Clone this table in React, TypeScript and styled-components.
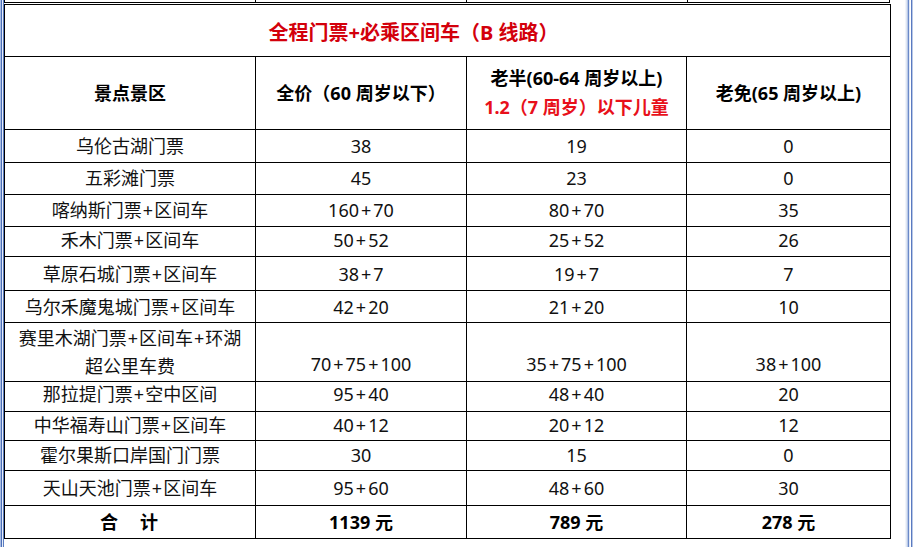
import React from "react";
import styled, { createGlobalStyle } from "styled-components";

const Global = createGlobalStyle`
  html, body { margin: 0; padding: 0; background: #ffffff; }
  body { font-family: "Noto Sans", "Noto Sans CJK SC", sans-serif; }
`;

const Page = styled.div`
  display: flex;
  width: 913px;
  height: 547px;
  overflow: hidden;
  background: #ffffff;
`;

const LeftRail = styled.div`
  flex: none;
  width: 4px;
  background: linear-gradient(
    to right,
    #a9bde3 0 1px,
    #4d6fb8 1px 2px,
    #e6edf8 2px 3px,
    #5a7cc0 3px 4px
  );
`;

const RightGap = styled.div`
  flex: none;
  width: 14px;
`;

const RightRail = styled.div`
  flex: none;
  width: 8px;
  background: linear-gradient(
    to right,
    #f1f4fa 0 1px,
    #dde5f3 1px 2px,
    #b8c8e7 2px 3px,
    #6a89c8 3px 4px,
    #e4eaf6 4px 5px,
    #ffffff 5px 6px,
    #5a7ac0 6px 7px,
    #b9c8e6 7px 8px
  );
`;

const Sheet = styled.div`
  flex: none;
  width: 887px;
  display: flex;
  flex-direction: column;
  gap: 1px;
`;

const PrevStrip = styled.div`
  display: grid;
  grid-template-columns: 250px 210px 220px 201px;
  gap: 1px;
  padding: 0 1px 1px 1px;
  width: 886px;
  box-sizing: border-box;
  background: #000;
`;

const PrevCell = styled.div`
  height: 2px;
  background: #fff;
`;

const Grid = styled.div`
  display: grid;
  grid-template-columns: 250px 210px 219px 203px;
  gap: 1px;
  padding: 1px;
  background: #000;
`;

const Cell = styled.div<{
  $h: number;
  $bold?: boolean;
  $valign?: "center" | "end";
  $lift?: number;
}>`
  height: ${(p) => p.$h}px;
  box-sizing: border-box;
  background: #fff;
  display: flex;
  flex-direction: column;
  align-items: center;
  justify-content: ${(p) => (p.$valign === "end" ? "flex-end" : "center")};
  padding-bottom: ${(p) =>
    p.$valign === "end" ? 3 : Math.max(0, (p.$lift ?? 0) * 2)}px;
  padding-top: ${(p) => Math.max(0, -(p.$lift ?? 0) * 2)}px;
  text-align: center;
  font-size: 18px;
  line-height: 28px;
  font-weight: ${(p) => (p.$bold ? 700 : 400)};
  color: ${(p) => (p.$bold ? "#000" : "#111")};
  white-space: nowrap;
`;

const TitleCell = styled.div`
  grid-column: span 4;
  height: 51px;
  background: #fff;
  display: flex;
  align-items: center;
  justify-content: center;
  padding: 5px 68px 0 0;
  box-sizing: border-box;
  font-size: 20px;
  line-height: 28px;
  font-weight: 700;
  color: #d3000b;
`;

const HeadLine = styled.span<{ $red?: boolean }>`
  display: block;
  line-height: 29px;
  color: ${(p) => (p.$red ? "#e8101a" : "#000")};
`;

const Plus = styled.span<{ $wide?: boolean }>`
  margin: 0 ${(p) => (p.$wide ? 2 : 1)}px;
`;

function withPlus(text: string, wide?: boolean) {
  const parts = text.split("+");
  return parts.map((part, i) => (
    <React.Fragment key={i}>
      {i > 0 && <Plus $wide={wide}>+</Plus>}
      {part}
    </React.Fragment>
  ));
}

const SumLabel = styled.span`
  letter-spacing: 2px;
`;

type Row = {
  name: string[];
  a: string;
  b: string;
  c: string;
  h: number;
  lift?: number;
  wrap?: boolean;
};

const rows: Row[] = [
  { name: ["乌伦古湖门票"], a: "38", b: "19", c: "0", h: 32 },
  { name: ["五彩滩门票"], a: "45", b: "23", c: "0", h: 31, lift: 1 },
  { name: ["喀纳斯门票+区间车"], a: "160+70", b: "80+70", c: "35", h: 31, lift: 1 },
  { name: ["禾木门票+区间车"], a: "50+52", b: "25+52", c: "26", h: 29, lift: 2 },
  { name: ["草原石城门票+区间车"], a: "38+7", b: "19+7", c: "7", h: 33 },
  { name: ["乌尔禾魔鬼城门票+区间车"], a: "42+20", b: "21+20", c: "10", h: 31 },
  {
    name: ["赛里木湖门票+区间车+环湖", "超公里车费"],
    a: "70+75+100",
    b: "35+75+100",
    c: "38+100",
    h: 58,
    wrap: true,
  },
  { name: ["那拉提门票+空中区间"], a: "95+40", b: "48+40", c: "20", h: 29, lift: 3 },
  { name: ["中华福寿山门票+区间车"], a: "40+12", b: "20+12", c: "12", h: 28, lift: 1 },
  { name: ["霍尔果斯口岸国门门票"], a: "30", b: "15", c: "0", h: 29, lift: 1 },
  { name: ["天山天池门票+区间车"], a: "95+60", b: "48+60", c: "30", h: 34 },
];

export default function App() {
  return (
    <>
      <Global />
      <Page>
        <LeftRail />
        <Sheet>
          <PrevStrip>
            <PrevCell />
            <PrevCell />
            <PrevCell />
            <PrevCell />
          </PrevStrip>
          <Grid>
            <TitleCell>全程门票+必乘区间车（B 线路）</TitleCell>

            <Cell $h={72} $bold>景点景区</Cell>
            <Cell $h={72} $bold>全价（60 周岁以下）</Cell>
            <Cell $h={72} $bold>
              <HeadLine>老半(60-64 周岁以上)</HeadLine>
              <HeadLine $red>1.2（7 周岁）以下儿童</HeadLine>
            </Cell>
            <Cell $h={72} $bold>老免(65 周岁以上)</Cell>

            {rows.map((r, i) => (
              <React.Fragment key={i}>
                <Cell $h={r.h} $lift={r.lift}>
                  {r.name.map((line, j) => (
                    <span key={j}>{withPlus(line)}</span>
                  ))}
                </Cell>
                <Cell $h={r.h} $lift={r.lift} $valign={r.wrap ? "end" : "center"}>
                  <span>{withPlus(r.a, true)}</span>
                </Cell>
                <Cell $h={r.h} $lift={r.lift} $valign={r.wrap ? "end" : "center"}>
                  <span>{withPlus(r.b, true)}</span>
                </Cell>
                <Cell $h={r.h} $lift={r.lift} $valign={r.wrap ? "end" : "center"}>
                  <span>{withPlus(r.c, true)}</span>
                </Cell>
              </React.Fragment>
            ))}

            <Cell $h={32} $bold>
              <SumLabel>合　计</SumLabel>
            </Cell>
            <Cell $h={32} $bold>1139 元</Cell>
            <Cell $h={32} $bold>789 元</Cell>
            <Cell $h={32} $bold>278 元</Cell>
          </Grid>
        </Sheet>
        <RightGap />
        <RightRail />
      </Page>
    </>
  );
}
